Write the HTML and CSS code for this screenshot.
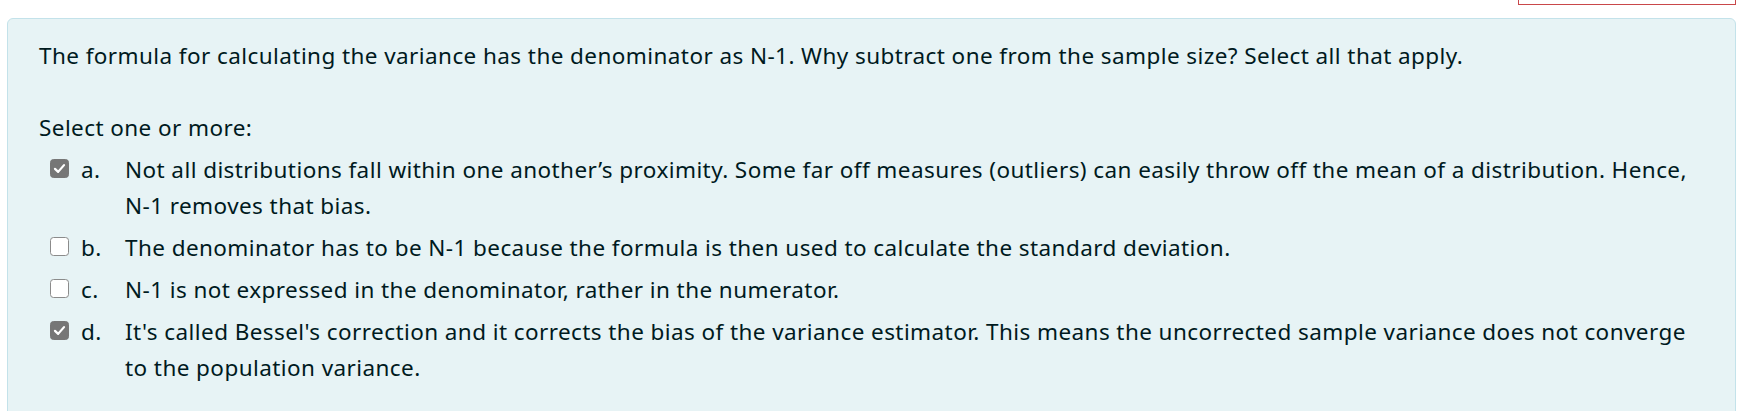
FILE: index.html
```html
<!DOCTYPE html>
<html lang="en">
<head>
<meta charset="utf-8">
<title>Question</title>
<link rel="stylesheet" href="styles.css">
</head>
<body>
<div class="page">
  <div class="topbar"><div class="flag-box"></div></div>
  <div class="formulation">
    <p class="qtext">The formula for calculating the variance has the denominator as N-1. Why subtract one from the sample size? Select all that apply.</p>
    <div class="ablock">
      <div class="prompt">Select one or more:</div>
      <div class="answer">
        <div class="opt">
          <span class="cb checked"><svg viewBox="0 0 20 20" width="15" height="15"><path d="M4 10.5 L8.2 14.5 L16 5.5" fill="none" stroke="#fff" stroke-width="3" stroke-linecap="round" stroke-linejoin="round"/></svg></span>
          <span class="num">a.</span>
          <span class="txt">Not all distributions fall within one another’s proximity. Some far off measures (outliers) can easily throw off the mean of a distribution. Hence, N-1 removes that bias.</span>
        </div>
        <div class="opt">
          <span class="cb"></span>
          <span class="num">b.</span>
          <span class="txt">The denominator has to be N-1 because the formula is then used to calculate the standard deviation.</span>
        </div>
        <div class="opt">
          <span class="cb"></span>
          <span class="num">c.</span>
          <span class="txt">N-1 is not expressed in the denominator, rather in the numerator.</span>
        </div>
        <div class="opt">
          <span class="cb checked"><svg viewBox="0 0 20 20" width="15" height="15"><path d="M4 10.5 L8.2 14.5 L16 5.5" fill="none" stroke="#fff" stroke-width="3" stroke-linecap="round" stroke-linejoin="round"/></svg></span>
          <span class="num">d.</span>
          <span class="txt">It's called Bessel's correction and it corrects the bias of the variance estimator. This means the uncorrected sample variance does not converge to the population variance.</span>
        </div>
      </div>
    </div>
  </div>
</div>
</body>
</html>
```
FILE: styles.css
```css
html, body {
  margin: 0;
  padding: 0;
  background: #ffffff;
}
body {
  font-family: "Noto Sans", "Open Sans", sans-serif;
  font-size: 22.5px;
  letter-spacing: 0.42px;
  line-height: 36px;
  color: #001a1e;
}
.page {
  padding: 0 10px 0 7px;
}
.topbar {
  display: flex;
  justify-content: flex-end;
  height: 18px;
}
.flag-box {
  width: 216px;
  height: 5px;
  border: 1px solid #c9474a;
  border-top: none;
  margin-top: -1px;
}
.formulation {
  background: #e7f3f5;
  border: 1px solid #c3e2ea;
  border-radius: 6px;
  padding: 19px 31px 40px 31px;
}
.qtext {
  margin: 0 0 36px 0;
}
.prompt {
  margin-bottom: 6px;
}
.answer {
  display: flex;
  flex-direction: column;
  gap: 6px;
}
.opt {
  display: flex;
  align-items: flex-start;
  padding-left: 11px;
}
.cb {
  flex: none;
  width: 17px;
  height: 17px;
  margin-top: 7px;
  border: 1.5px solid #8b8b8b;
  border-radius: 3.5px;
  background: #ffffff;
  display: flex;
  align-items: center;
  justify-content: center;
}
.cb.checked {
  background: #767676;
  border-color: #767676;
}
.num {
  flex: none;
  width: 44px;
  margin-left: 12px;
}
.txt {
  flex: 1;
}
```
